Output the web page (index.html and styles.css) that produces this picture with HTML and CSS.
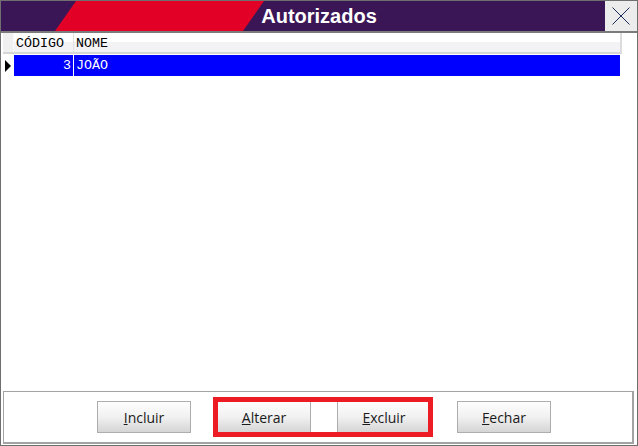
FILE: index.html
```html
<!DOCTYPE html>
<html>
<head>
<meta name="viewport" content="width=device-width, initial-scale=1">
<link rel="stylesheet" href="styles.css">
</head>
<body>

<div class="window">
    <!-- Title bar -->
    <div class="titlebar">
        <div class="title">Autorizados</div>
        <button class="closebtn" title="Fechar">
            <svg width="18" height="18" viewBox="0 0 18 18">
                <path d="M0.5 0.5 L17.5 17.5 M17.5 0.5 L0.5 17.5" stroke="#1d2b5c" stroke-width="1" fill="none"/>
            </svg>
        </button>
    </div>

    <!-- Grid -->
    <div class="grid">
        <div class="grid-head">
            <div class="ind"></div>
            <div class="col code">CÓDIGO</div>
            <div class="col name">NOME</div>
        </div>
        <div class="grid-row selected">
            <div class="ind"><span class="arrow"></span></div>
            <div class="col code num">3</div>
            <div class="col name">JOÃO</div>
        </div>
    </div>

    <div class="spacer"></div>

    <!-- Buttons -->
    <div class="frame">
        <button class="btn"><u>I</u>ncluir</button>
        <button class="btn"><u>A</u>lterar</button>
        <button class="btn"><u>E</u>xcluir</button>
        <button class="btn"><u>F</u>echar</button>
        <div class="highlight"></div>
    </div>
</div>

</body>
</html>
```

FILE: styles.css
```css
* {
    box-sizing: border-box;
    margin: 0;
    padding: 0;
}

body {
    background: #fff;
    font-family: 'Open Sans', 'Liberation Sans', sans-serif;
}

.window {
    width: 638px;
    height: 446px;
    border: 1px solid #6f6f6f;
    display: flex;
    flex-direction: column;
    background: #fff;
}

.titlebar {
    position: relative;
    height: 32px;
    display: flex;
    background: #3a1656;
    border-bottom: 2px solid #7b7b7b;
}

/* red stripe */
.titlebar::before {
    content: "";
    position: absolute;
    left: 54px;
    top: 0;
    width: 209px;
    height: 30px;
    background: #e20026;
    clip-path: polygon(21px 0, 100% 0, calc(100% - 21px) 100%, 0 100%);
}

.title {
    position: relative;
    flex-grow: 1;
    padding-left: 32px;
    text-align: center;
    color: #fff;
    font-family: 'Liberation Sans', Arial, sans-serif;
    font-weight: bold;
    font-size: 20px;
    line-height: 31px;
}

.closebtn {
    width: 32px;
    height: 30px;
    border: none;
    background: #ececec;
    display: flex;
    align-items: center;
    justify-content: center;
}

.grid {
    margin-left: 2px;
    width: 619px;
    font-family: 'Liberation Mono', 'Courier New', monospace;
    font-size: 13.3px;
}

.grid-head {
    display: flex;
    height: 21px;
    border-bottom: 2px solid #d6d6d6;
    border-right: 2px solid #dcdcdc;
    background: linear-gradient(#fff 0, #fff 45%, #f3f3f5 45%, #f3f3f5 100%);
    color: #000;
}

.grid-head .ind {
    background: #f0f0f0;
    border-right: 1px solid #fafafa;
}

.grid-head .col {
    padding-top: 2px;
    line-height: 17px;
}

.ind {
    width: 11px;
    flex-shrink: 0;
    display: flex;
    align-items: center;
    padding-left: 2px;
}

.col {
    line-height: 19px;
    padding: 0 2px;
    white-space: nowrap;
}

.code {
    width: 60px;
    border-right: 1px solid #e2e2e2;
}

.name {
    flex-grow: 1;
}

.num {
    text-align: right;
}

.grid-row {
    display: flex;
    height: 21px;
    margin-top: 1px;
    width: 617px;
}

.grid-row .col {
    line-height: 22px;
}

.selected .col {
    background: #0000ff;
    color: #fff;
}

.selected .code {
    border-right: 1px solid #fff;
}

.arrow {
    width: 0;
    height: 0;
    border-top: 6px solid transparent;
    border-bottom: 6px solid transparent;
    border-left: 6px solid #000;
}

.spacer {
    flex-grow: 1;
}

.frame {
    position: relative;
    height: 53px;
    margin: 0 3px 1px 2px;
    border: 1px solid #a3a3a3;
    border-right-width: 2px;
    border-bottom-width: 2px;
    display: flex;
    gap: 26px;
    padding: 9px 0 0 93px;
}

.btn {
    width: 94px;
    height: 32px;
    border: 1px solid #adadad;
    background: linear-gradient(#fdfdfd 0%, #f1f1f1 50%, #d5d5d5 100%);
    font-family: 'Open Sans', 'Liberation Sans', sans-serif;
    font-size: 14px;
    color: #1a1a1a;
}

.highlight {
    position: absolute;
    left: 209px;
    top: 5px;
    width: 220px;
    height: 40px;
    border: 5px solid #ed1c24;
}
```
